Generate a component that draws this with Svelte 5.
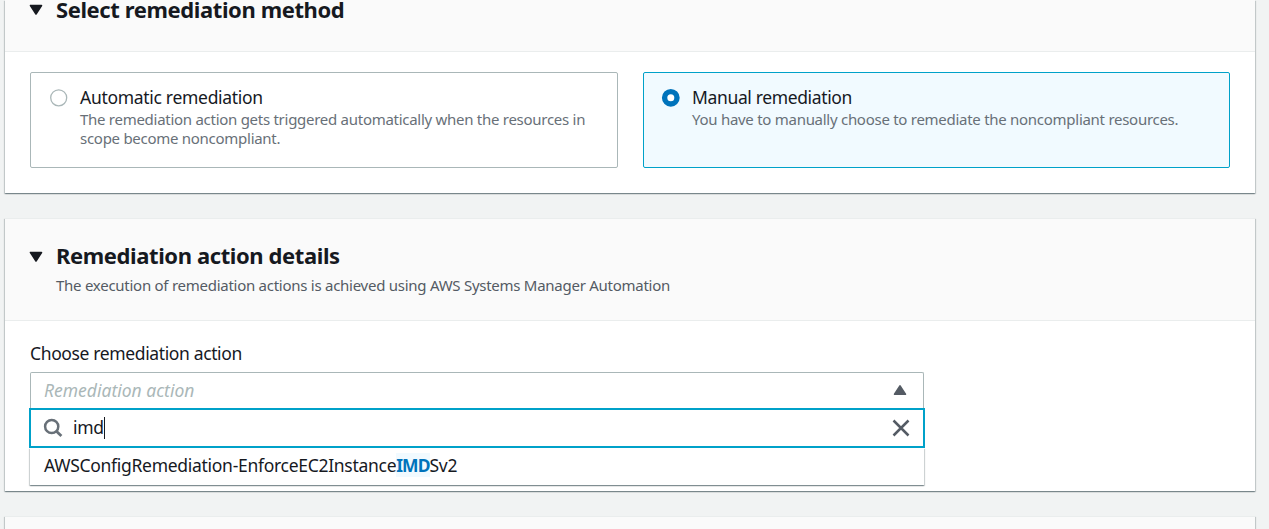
<script>
  let method = $state('manual');
  let query = $state('imd');
  const methods = [
    {
      id: 'automatic',
      title: 'Automatic remediation',
      text: 'The remediation action gets triggered automatically when the resources in scope become noncompliant.'
    },
    {
      id: 'manual',
      title: 'Manual remediation',
      text: 'You have to manually choose to remediate the noncompliant resources.'
    }
  ];
</script>

{#snippet caret()}
  <svg class="caret" width="14" height="12" viewBox="0 0 14 12">
    <path d="M1.5 1.5h11L7 10z" fill="#16191f" stroke="#16191f" stroke-width="1.6" stroke-linejoin="round" />
  </svg>
{/snippet}

<main>
  <section class="card method">
    <header>
      {@render caret()}
      <h2>Select remediation method</h2>
    </header>
    <div class="tiles">
      {#each methods as m (m.id)}
        <button class="tile" class:selected={method === m.id} onclick={() => (method = m.id)}>
          <svg class="radio" width="18" height="18" viewBox="0 0 18 18" fill="#fff">
            {#if method === m.id}
              <circle cx="8.8" cy="8.8" r="6.2" stroke="#0073bb" stroke-width="5.4" />
            {:else}
              <circle cx="8.7" cy="8.8" r="8" stroke="#aab7b8" stroke-width="1.3" />
            {/if}
          </svg>
          <span class="copy">
            <span class="title {m.id}">{m.title}</span>
            <span class="desc">{m.text}</span>
          </span>
        </button>
      {/each}
    </div>
  </section>

  <section class="card details">
    <header>
      {@render caret()}
      <div>
        <h2>Remediation action details</h2>
        <p>The execution of remediation actions is achieved using AWS Systems Manager Automation</p>
      </div>
    </header>
    <div class="field">
      <div class="label">Choose remediation action</div>
      <div class="select">
        <div class="trigger">
          <span>Remediation action</span>
          <svg width="14" height="12" viewBox="0 0 14 12">
            <path d="M1.6 10.2h10.8L7 2z" fill="#545b64" stroke="#545b64" stroke-width="1.7" stroke-linejoin="round" />
          </svg>
        </div>
        <div class="menu">
          <div class="search">
            <svg width="20" height="20" viewBox="0 0 20 20" fill="none" stroke="#687078" stroke-width="2.5">
              <circle cx="8.7" cy="8.5" r="6.6" />
              <path d="M13.4 13.2l5 4.8" stroke-width="2.8" />
            </svg>
            <span class="query">{query}</span><i class="cursor"></i>
            <svg class="clear" width="18" height="18" viewBox="0 0 18 18">
              <path d="M1.5 1.5l15 15M16.5 1.5l-15 15" stroke="#545b64" stroke-width="2.5" />
            </svg>
          </div>
          <div class="option">AWSConfigRemediation-EnforceEC2Instance<mark>IMD</mark>Sv2</div>
        </div>
      </div>
    </div>
  </section>

  <section class="card next"><header></header></section>
</main>

<style>
  :global(body) {
    background: #f1f3f3;
    overflow: hidden;
  }
  main {
    box-sizing: border-box;
    height: 529px;
    padding: 0 14px 0 5px;
    overflow: hidden;
    display: flex;
    flex-direction: column;
    font-family: 'Noto Sans', sans-serif;
    font-size: 17.5px;
    color: #16191f;
  }
  .card {
    box-sizing: border-box;
    flex: none;
    background: #fff;
    border-top: 1px solid #eaeded;
    box-shadow:
      0 1px 1px 0 rgba(0, 28, 36, 0.3),
      1px 1px 1px 0 rgba(0, 28, 36, 0.15),
      -1px 1px 1px 0 rgba(0, 28, 36, 0.15);
  }
  header {
    box-sizing: border-box;
    display: flex;
    background: #fafafa;
    border-bottom: 1px solid #eaeded;
    padding-left: 24px;
  }
  .caret {
    flex: none;
    margin-right: 13px;
  }
  h2 {
    margin: 0;
    font-size: 22px;
    line-height: 24px;
    letter-spacing: -0.4px;
    font-weight: 700;
  }
  header p {
    margin: 9px 0 0;
    font-size: 15px;
    line-height: 19px;
    letter-spacing: -0.263px;
    color: #545b64;
  }
  .method {
    height: 193px;
    border-top: 0;
  }
  .method header {
    height: 52px;
  }
  .method h2 {
    margin-top: -3px;
  }
  .method .caret {
    margin-top: 4px;
  }
  .tiles {
    display: grid;
    grid-template-columns: 588px 587px;
    gap: 25px;
    padding: 20px 25px;
  }
  .tile {
    box-sizing: border-box;
    height: 96px;
    display: flex;
    align-items: flex-start;
    gap: 12px;
    padding: 13px 24px 0 19px;
    border: 1px solid #aab7b8;
    border-radius: 2px;
    background: #fff;
    font: inherit;
    color: inherit;
    text-align: left;
  }
  .tile.selected {
    border-color: #00a1c9;
    background: #f1faff;
    padding-left: 18px;
  }
  .radio {
    flex: none;
    margin-top: 3px;
    overflow: visible;
  }
  .copy {
    display: flex;
    flex-direction: column;
  }
  .title {
    line-height: 22px;
    letter-spacing: -0.3px;
  }
  .title.manual {
    letter-spacing: -0.36px;
  }
  .desc {
    margin-top: 2px;
    font-size: 15px;
    line-height: 19px;
    letter-spacing: -0.275px;
    color: #687078;
  }
  .details {
    height: 273px;
    margin-top: 25px;
  }
  .details header {
    height: 102px;
    padding-top: 24px;
  }
  .details .caret {
    margin-top: 8px;
  }
  .field {
    padding: 20px 25px 0;
  }
  .label {
    line-height: 24px;
    letter-spacing: -0.37px;
  }
  .select {
    position: relative;
    width: 894px;
    margin-top: 7px;
  }
  .trigger {
    box-sizing: border-box;
    height: 37px;
    display: flex;
    align-items: center;
    justify-content: space-between;
    border: 1px solid #aab7b8;
    border-bottom: 0;
    border-radius: 2px 2px 0 0;
    padding: 0 16px 2px 13px;
    font-style: italic;
    color: #aab7b8;
  }
  .menu {
    position: absolute;
    top: 36px;
    left: -1px;
    width: 896px;
  }
  .search {
    box-sizing: border-box;
    height: 40px;
    display: flex;
    align-items: center;
    border: 2px solid #00a1c9;
    background: #fff;
    padding: 0 13px 0 12px;
  }
  .query {
    margin-left: 10px;
    padding-bottom: 2px;
    letter-spacing: -0.3px;
  }
  .cursor {
    width: 1px;
    height: 22px;
    background: #16191f;
  }
  .clear {
    margin-left: auto;
  }
  .option {
    box-sizing: border-box;
    margin: 0 1px;
    height: 37px;
    padding-left: 14px;
    line-height: 34px;
    background: #fff;
    letter-spacing: -0.29px;
    box-shadow:
      0 1px 1px 0 rgba(0, 28, 36, 0.3),
      1px 1px 1px 0 rgba(0, 28, 36, 0.15),
      -1px 1px 1px 0 rgba(0, 28, 36, 0.15);
  }
  mark {
    background: #f1faff;
    color: #0073bb;
    font-weight: 700;
    letter-spacing: -0.95px;
  }
  .next {
    height: 80px;
    margin-top: 25px;
  }
  .next header {
    height: 60px;
  }
</style>
